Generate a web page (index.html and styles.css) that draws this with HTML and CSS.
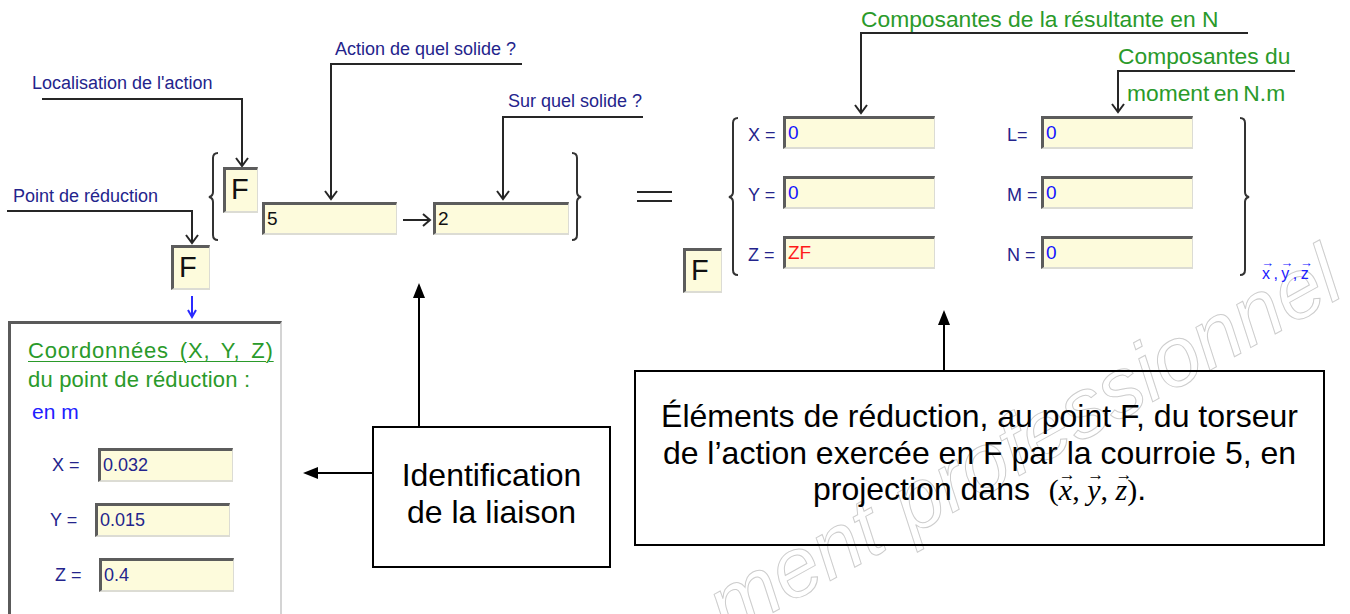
FILE: index.html
```html
<!DOCTYPE html>
<html lang="fr">
<head>
<meta charset="utf-8">
<title>Torseur de l'action en F</title>
<link rel="stylesheet" href="styles.css">
</head>
<body>
<div class="canvas">
  <div class="watermark">ment professionnel</div>

  <svg class="wires" width="1350" height="614" viewBox="0 0 1350 614">
    <g class="wire">
      <polyline points="42,99 242,99 242,165"/>
      <polyline points="236,158 242,166 248,158"/>
      <polyline points="7,211 192,211 192,242"/>
      <polyline points="186,235 192,243 198,235"/>
      <polyline points="522,64 331,64 331,198"/>
      <polyline points="325,191 331,199 337,191"/>
      <polyline points="643,117 503,117 503,198"/>
      <polyline points="497,191 503,199 509,191"/>
      <polyline points="1248,33 861,33 861,112"/>
      <polyline points="855,105 861,113 867,105"/>
      <polyline points="1295,71 1118,71 1118,111"/>
      <polyline points="1112,104 1118,112 1124,104"/>
      <line x1="403" y1="220" x2="429" y2="220"/>
      <polyline points="423,214 430,220 423,226"/>
      <line x1="637" y1="192" x2="672" y2="192"/>
      <line x1="637" y1="201" x2="672" y2="201"/>
    </g>
    <g class="brace">
      <path d="M218 153 Q213 153 213 158 V192 Q213 196 209 197 Q213 198 213 202 V235 Q213 240 218 240"/>
      <path d="M572 153 Q577 153 577 158 V192 Q577 196 581 197 Q577 198 577 202 V235 Q577 240 572 240"/>
      <path d="M738 118 Q733 118 733 123 V192 Q733 196 729 197 Q733 198 733 202 V270 Q733 275 738 275"/>
      <path d="M1240 118 Q1245 118 1245 123 V192 Q1245 196 1249 197 Q1245 198 1245 202 V270 Q1245 275 1240 275"/>
    </g>
    <g class="blue-arrow">
      <line x1="192" y1="296" x2="192" y2="316"/>
      <polyline points="188,310 192,317 196,310"/>
    </g>
    <g class="callout">
      <line x1="419" y1="426" x2="419" y2="296"/>
      <polygon points="419,283 413,298 425,298"/>
      <line x1="372" y1="473" x2="316" y2="473"/>
      <polygon points="303,473 318,467 318,479"/>
      <line x1="944" y1="370" x2="944" y2="322"/>
      <polygon points="944,310 938,325 950,325"/>
    </g>
  </svg>

  <div class="node lbl navy loc">Localisation de l'action</div>
  <div class="node lbl navy action">Action de quel solide ?</div>
  <div class="node lbl navy sur">Sur quel solide ?</div>
  <div class="node lbl navy point">Point de réduction</div>

  <div class="node fbox f-top">F</div>
  <div class="node fbox f-bottom">F</div>
  <div class="node fbox f-right">F</div>

  <div class="node field solid-a">5</div>
  <div class="node field solid-b">2</div>

  <div class="node lbl green result">Composantes de la résultante en N</div>
  <div class="node lbl green moment">Composantes du<br><span class="indent">moment en N.m</span></div>

  <div class="node matrix">
    <span class="mlabel">X =</span><div class="field val blue">0</div><span></span>
    <span class="mlabel">L=</span><div class="field val blue">0</div>
    <span class="mlabel">Y =</span><div class="field val blue">0</div><span></span>
    <span class="mlabel">M =</span><div class="field val blue">0</div>
    <span class="mlabel">Z =</span><div class="field val red">ZF</div><span></span>
    <span class="mlabel">N =</span><div class="field val blue">0</div>
  </div>

  <div class="node basis"><span class="svec">x</span> , <span class="svec">y</span> , <span class="svec">z</span></div>

  <div class="node groupbox">
    <div class="gb-title">Coordonnées (X, Y, Z)</div>
    <div class="gb-sub">du point de réduction :</div>
    <div class="gb-unit">en m</div>
    <div class="gb-rows">
      <div class="gb-row"><span class="gb-label">X =</span><div class="field coord">0.032</div></div>
      <div class="gb-row shift"><span class="gb-label">Y =</span><div class="field coord">0.015</div></div>
      <div class="gb-row nudge"><span class="gb-label">Z =</span><div class="field coord">0.4</div></div>
    </div>
  </div>

  <div class="node callbox ident">Identification<br>de la liaison</div>
  <div class="node callbox elements">Éléments de réduction, au point F, du torseur<br>de l’action exercée en F par la courroie 5, en<br>projection dans <span class="math">(<span class="vec">x</span>, <span class="vec">y</span>, <span class="vec">z</span>)</span>.</div>
</div>
</body>
</html>
```

FILE: styles.css
```css
html, body {
  margin: 0;
  padding: 0;
  background: #ffffff;
}

body {
  font-family: "Liberation Sans", Arial, sans-serif;
}

.canvas {
  position: relative;
  width: 1350px;
  height: 614px;
  overflow: hidden;
  background: #ffffff;
}

.wires {
  position: absolute;
  left: 0;
  top: 0;
}

.wire polyline,
.wire line {
  fill: none;
  stroke: #262626;
  stroke-width: 2;
}

.brace path {
  fill: none;
  stroke: #333333;
  stroke-width: 2;
}

.blue-arrow line,
.blue-arrow polyline {
  fill: none;
  stroke: #2a2aff;
  stroke-width: 2;
}

.callout line {
  stroke: #000000;
  stroke-width: 2;
}

.callout polygon {
  fill: #000000;
}

.node {
  position: absolute;
}

.lbl {
  white-space: nowrap;
  line-height: 22px;
}

.navy {
  color: #24248c;
  font-size: 18px;
}

.green {
  color: #2a9a2a;
  font-size: 22.8px;
  line-height: 26px;
}

.loc { left: 32px; top: 72px; }
.action { left: 335px; top: 38px; }
.sur { left: 508px; top: 90px; }
.point { left: 13px; top: 185px; }

.result { left: 861px; top: 6px; }
.moment { left: 1118px; top: 38px; line-height: 37px; }
.moment .indent { padding-left: 9px; word-spacing: -2px; }

/* sunken edit fields */
.field,
.fbox {
  box-sizing: border-box;
  background: #fdfbdc;
  border-top: 3px solid #5c5c5c;
  border-left: 3px solid #5c5c5c;
  border-right: 1px solid #dcdcd4;
  border-bottom: 2px solid #dcdcd4;
  color: #111111;
}

.fbox {
  font-size: 29px;
  line-height: 38px;
  padding-left: 5px;
}

.f-top { left: 223px; top: 167px; width: 35px; height: 46px; }
.f-bottom { left: 171px; top: 245px; width: 39px; height: 45px; }
.f-right { left: 683px; top: 248px; width: 39px; height: 45px; }

.field {
  height: 33px;
  font-size: 19px;
  line-height: 27px;
  padding-left: 2px;
  white-space: nowrap;
}

.solid-a { left: 262px; top: 202px; width: 135px; }
.solid-b { left: 433px; top: 202px; width: 136px; }

.matrix {
  left: 748px;
  top: 116px;
  display: grid;
  grid-template-columns: 35px 152px 72px 34px 152px;
  grid-template-rows: repeat(3, 33px);
  row-gap: 27px;
  align-items: center;
}

.mlabel {
  color: #24248c;
  font-size: 18px;
  line-height: 22px;
  padding-top: 5px;
  white-space: nowrap;
}

.val { width: 152px; }
.blue { color: #1414ff; }
.red { color: #ff1a1a; }

.basis {
  left: 1262px;
  top: 265px;
  color: #2020ff;
  font-size: 16px;
  line-height: 18px;
  white-space: nowrap;
  word-spacing: -1px;
}

.svec {
  position: relative;
  display: inline-block;
}

.svec::before {
  content: "→";
  position: absolute;
  left: -1px;
  top: -11px;
  font-size: 13px;
}

/* group box with coordinates */
.groupbox {
  left: 8px;
  top: 321px;
  width: 274px;
  height: 310px;
  box-sizing: border-box;
  border-top: 3px solid #5a5a5a;
  border-left: 3px solid #5a5a5a;
  border-right: 2px solid #d4d4d4;
  padding: 15px 0 0 17px;
  display: flex;
  flex-direction: column;
  background: #ffffff;
}

.gb-title {
  color: #2a9a2a;
  font-size: 22px;
  line-height: 24px;
  text-decoration: underline;
  text-underline-offset: 3px;
  text-decoration-thickness: 1px;
  white-space: nowrap;
  word-spacing: 4px;
  letter-spacing: 0.8px;
}

.gb-sub {
  color: #2a9a2a;
  font-size: 22px;
  line-height: 24px;
  letter-spacing: 0.2px;
  margin-top: 5px;
  white-space: nowrap;
}

.gb-unit {
  color: #2020ff;
  font-size: 21px;
  line-height: 24px;
  margin-top: 8px;
  padding-left: 4px;
}

.gb-rows {
  margin-top: 24px;
  display: flex;
  flex-direction: column;
  gap: 21px;
}

.gb-row {
  display: flex;
  align-items: center;
  padding-left: 24px;
}

.gb-row.shift { padding-left: 22px; }
.gb-row.nudge { padding-left: 27px; }

.gb-label {
  width: 46px;
  color: #24248c;
  font-size: 18px;
  line-height: 22px;
}

.gb-row.shift .gb-label { width: 45px; }
.gb-row.nudge .gb-label { width: 44px; }

.coord {
  width: 135px;
  height: 34px;
  color: #24248c;
  font-size: 18px;
  line-height: 28px;
}

/* callout boxes */
.callbox {
  box-sizing: border-box;
  border: 2px solid #000000;
  background: transparent;
  color: #000000;
  font-size: 32px;
  line-height: 36.5px;
  text-align: center;
  white-space: nowrap;
}

.ident {
  left: 372px;
  top: 426px;
  width: 239px;
  height: 142px;
  padding-top: 29px;
  background: #ffffff;
}

.elements {
  left: 634px;
  top: 370px;
  width: 691px;
  height: 176px;
  padding-top: 26px;
}

.math {
  font-family: "Liberation Serif", "Times New Roman", serif;
  font-size: 30px;
  margin-left: 10px;
}

.vec {
  position: relative;
  display: inline-block;
  font-style: italic;
}

.vec::before {
  content: "→";
  position: absolute;
  left: 0;
  top: -15px;
  font-size: 17px;
  font-style: normal;
}

.watermark {
  position: absolute;
  left: 692px;
  top: 575px;
  transform-origin: 0 0;
  transform: rotate(-29deg);
  font-family: "Liberation Sans", Arial, sans-serif;
  font-style: italic;
  font-size: 84px;
  line-height: 86px;
  color: transparent;
  -webkit-text-stroke: 1px #cdcdcd;
  white-space: nowrap;
  pointer-events: none;
}
```
